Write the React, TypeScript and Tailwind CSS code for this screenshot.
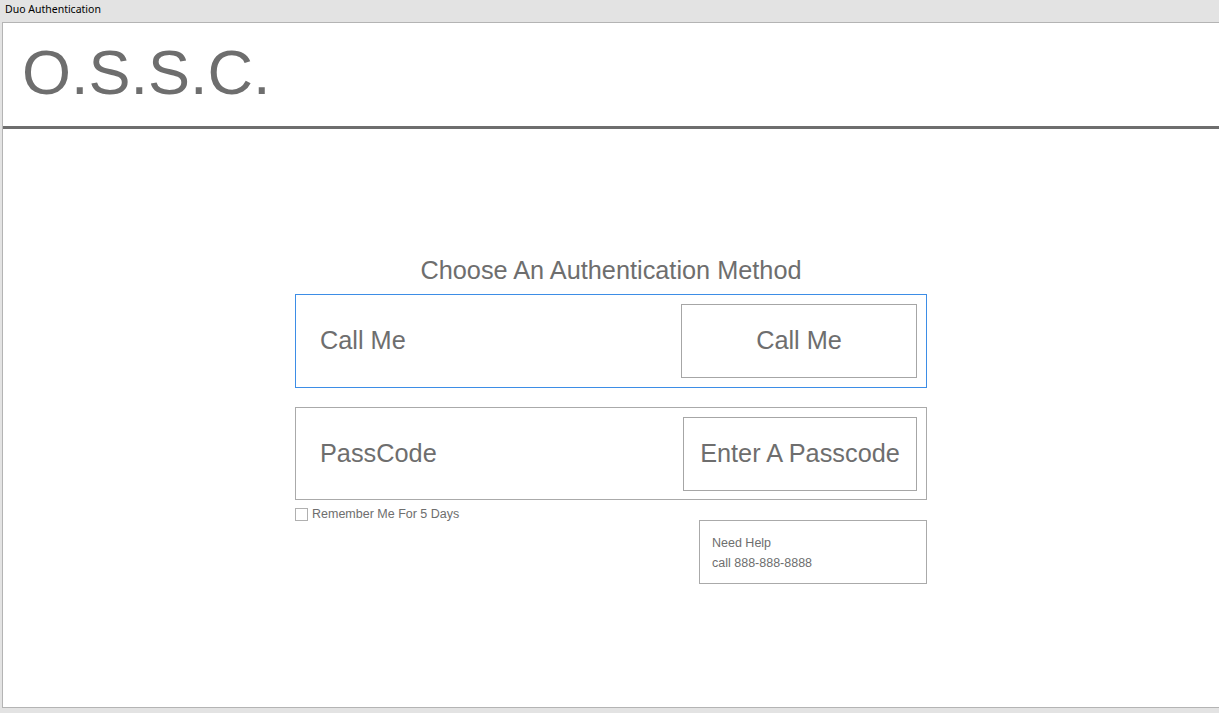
import React, { useState } from "react";

const sans = { fontFamily: '"Liberation Sans", Arial, sans-serif' };

export default function App() {
  const [remember, setRemember] = useState(false);

  return (
    <div className="w-[1219px] h-[713px] bg-[#e3e3e3] flex flex-col overflow-hidden">
      <div
        className="h-[22px] pl-[5px] text-[10.5px] leading-[18px] text-black"
        style={{ fontFamily: '"Segoe UI", "Noto Sans", sans-serif' }}
      >
        Duo Authentication
      </div>

      <div className="ml-[2px] h-[686px] bg-white border border-[#b4b4b4] border-r-0 flex flex-col" style={sans}>
        <div className="h-[106px] border-b-[3px] border-[#6e6e6e] pl-[19px] pt-[13px]">
          <h1 className="text-[63px] leading-[72px] text-[#6e6e6e]">O.S.S.C.</h1>
        </div>

        <div className="flex flex-col items-center pt-[126px]">
          <div className="w-[632px] flex flex-col">
            <h2 className="text-center text-[25.3px] leading-[30px] text-[#6e6e6e] mb-[9px]">
              Choose An Authentication Method
            </h2>

            <div className="h-[94px] border border-[#3d8de6] flex items-center justify-between pl-[24px] pr-[9px]">
              <span className="text-[25.3px] text-[#6e6e6e]">Call Me</span>
              <button className="w-[236px] h-[74px] border border-[#a6a6a6] text-[25.3px] text-[#6e6e6e] bg-white">
                Call Me
              </button>
            </div>

            <div className="mt-[19px] h-[93px] border border-[#aaaaaa] flex items-center justify-between pl-[24px] pr-[9px]">
              <span className="text-[25.3px] text-[#6e6e6e]">PassCode</span>
              <button className="w-[234px] h-[74px] border border-[#a6a6a6] text-[25.3px] text-[#6e6e6e] bg-white">
                Enter A Passcode
              </button>
            </div>

            <label className="mt-[6px] flex items-center gap-[4px] cursor-pointer w-fit">
              <span
                onClick={() => setRemember(!remember)}
                className="w-[13px] h-[13px] border border-[#b0b0b0] bg-white flex items-center justify-center text-[10px] leading-none text-[#6e6e6e]"
              >
                {remember ? "✓" : ""}
              </span>
              <span className="text-[12.5px] leading-[16px] text-[#6e6e6e]">Remember Me For 5 Days</span>
            </label>

            <div className="self-end mt-[-2px] w-[228px] h-[64px] border border-[#aaaaaa] pl-[12px] pt-[12px] text-[12.5px] leading-[20px] text-[#6e6e6e]">
              <p>Need Help</p>
              <p>call 888-888-8888</p>
            </div>
          </div>
        </div>
      </div>
    </div>
  );
}
